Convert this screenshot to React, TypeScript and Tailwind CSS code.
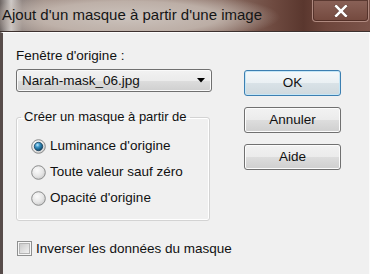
import React from "react";

const font = { fontFamily: '"Liberation Sans", Arial, sans-serif' };

function Radio({ checked }: { checked?: boolean }) {
  return (
    <svg width="15" height="15" viewBox="0 0 15 15" className="shrink-0">
      <defs>
        <radialGradient id="rbg" cx="40%" cy="35%" r="70%">
          <stop offset="0%" stopColor="#fbfbfb" />
          <stop offset="60%" stopColor="#e6e6e6" />
          <stop offset="100%" stopColor="#c9c9c9" />
        </radialGradient>
        <radialGradient id="rdot" cx="38%" cy="32%" r="75%">
          <stop offset="0%" stopColor="#bfeaff" />
          <stop offset="35%" stopColor="#3d97c8" />
          <stop offset="75%" stopColor="#1a5e86" />
          <stop offset="100%" stopColor="#0e3350" />
        </radialGradient>
      </defs>
      <circle cx="7.5" cy="7.5" r="6.8" fill="url(#rbg)" stroke="#8b8c8c" strokeWidth="1" />
      {checked && <circle cx="7.5" cy="7.5" r="4.2" fill="url(#rdot)" stroke="#19415d" strokeWidth="0.8" />}
    </svg>
  );
}

function Checkbox() {
  return (
    <svg width="15" height="15" viewBox="0 0 15 15" className="shrink-0">
      <defs>
        <linearGradient id="cbg" x1="0" y1="0" x2="1" y2="1">
          <stop offset="0%" stopColor="#c9c9c9" />
          <stop offset="100%" stopColor="#f3f3f3" />
        </linearGradient>
      </defs>
      <rect x="0.5" y="0.5" width="14" height="14" fill="#f7f7f7" stroke="#8e8f8f" />
      <rect x="2.5" y="2.5" width="10" height="10" fill="url(#cbg)" stroke="#b4b4b4" />
    </svg>
  );
}

function Button({ label, isDefault }: { label: string; isDefault?: boolean }) {
  return (
    <div
      className={
        "h-[26px] w-[97px] rounded-[3px] border flex items-center justify-center text-[13.5px] text-[#111] " +
        (isDefault
          ? "border-[#3c7fb1] bg-[linear-gradient(#f4f8fa_0%,#eaf0f3_50%,#d9e2e7_51%,#cfd9de_100%)] shadow-[inset_0_0_0_1px_#c5e6f6]"
          : "border-[#707070] bg-[linear-gradient(#f2f2f2_0%,#ebebeb_50%,#dddddd_51%,#cfcfcf_100%)] shadow-[inset_0_0_0_1px_#fcfcfc]")
      }
    >
      {label}
    </div>
  );
}

export default function App() {
  return (
    <div className="w-[370px] h-[274px] overflow-hidden flex flex-col" style={font}>
      {/* title bar */}
      <div className="h-[32px] shrink-0 flex items-start justify-between border-b border-[#3c302e] bg-[radial-gradient(ellipse_150px_26px_at_130px_17px,rgba(206,198,192,0.95)_0%,rgba(196,184,176,0.85)_60%,rgba(150,120,110,0)_100%),linear-gradient(90deg,#6e6664_0%,#cfcac7_3%,#8f8480_6%,#9e8c84_12%,#8a6e64_60%,#6e4a40_74%,#5a372e_82%,#6e463c_88%,#7c544a_100%)]">
        <div className="pl-[2px] pt-[6px] text-[15px] leading-[18px] text-[#151515] whitespace-nowrap">
          Ajout d'un masque à partir d'une image
        </div>
        <div className="mr-[1px] w-[57px] h-[22px] rounded-b-[4px] border border-t-0 border-[#b08a80] bg-[linear-gradient(#8a6258,#74493e)] flex items-center justify-center shadow-[inset_0_0_0_1px_rgba(60,30,24,0.6)]">
          <svg width="14" height="12" viewBox="0 0 14 12">
            <path d="M2 1 L12 11 M12 1 L2 11" stroke="#3a2420" strokeWidth="3.6" strokeLinecap="square" opacity="0.5" />
            <path d="M2.2 1.2 L11.8 10.8 M11.8 1.2 L2.2 10.8" stroke="#ffffff" strokeWidth="2.6" strokeLinecap="square" />
          </svg>
        </div>
      </div>

      {/* content */}
      <div className="flex-1 bg-[#f0f0f0] border-l-[3px] border-l-[#574c4a] border-t border-t-[#fdfdfd] border-r border-r-[#fbfbfb] flex text-[#111] text-[13.5px] leading-[16px]">
        <div className="pl-[13px] pt-[15px] flex flex-col w-[228px]">
          <div>Fenêtre d'origine :</div>
          <div className="mt-[5px] h-[23px] w-[196px] rounded-[3px] border border-[#707070] bg-[linear-gradient(#f2f2f2_0%,#ebebeb_50%,#dddddd_51%,#cfcfcf_100%)] shadow-[inset_0_0_0_1px_#fafafa] flex items-center justify-between pl-[5px] pr-[6px]">
            <span>Narah-mask_06.jpg</span>
            <svg width="8" height="5" viewBox="0 0 8 5">
              <polygon points="0,0 8,0 4,4.5" fill="#000" />
            </svg>
          </div>

          <fieldset className="mt-[17px] w-[194px] border border-[#d3d3d3] rounded-[3px] pb-[9px] shadow-[inset_0_0_0_1px_#ffffff]">
            <legend className="ml-[4px] px-[3px] text-[13px] leading-[16px]">Créer un masque à partir de</legend>
            <div className="pt-[8px] pl-[14px] flex flex-col">
              <label className="h-[26px] flex items-center gap-[4px]">
                <Radio checked />
                <span>Luminance d'origine</span>
              </label>
              <label className="h-[26px] flex items-center gap-[4px]">
                <Radio />
                <span>Toute valeur sauf zéro</span>
              </label>
              <label className="h-[26px] flex items-center gap-[4px]">
                <Radio />
                <span>Opacité d'origine</span>
              </label>
            </div>
          </fieldset>

          <label className="mt-[20px] ml-[1px] h-[15px] flex items-center gap-[4px]">
            <Checkbox />
            <span className="whitespace-nowrap">Inverser les données du masque</span>
          </label>
        </div>

        <div className="pt-[37px] pl-[13px] flex flex-col gap-[11px]">
          <Button label="OK" isDefault />
          <Button label="Annuler" />
          <Button label="Aide" />
        </div>
      </div>
    </div>
  );
}
